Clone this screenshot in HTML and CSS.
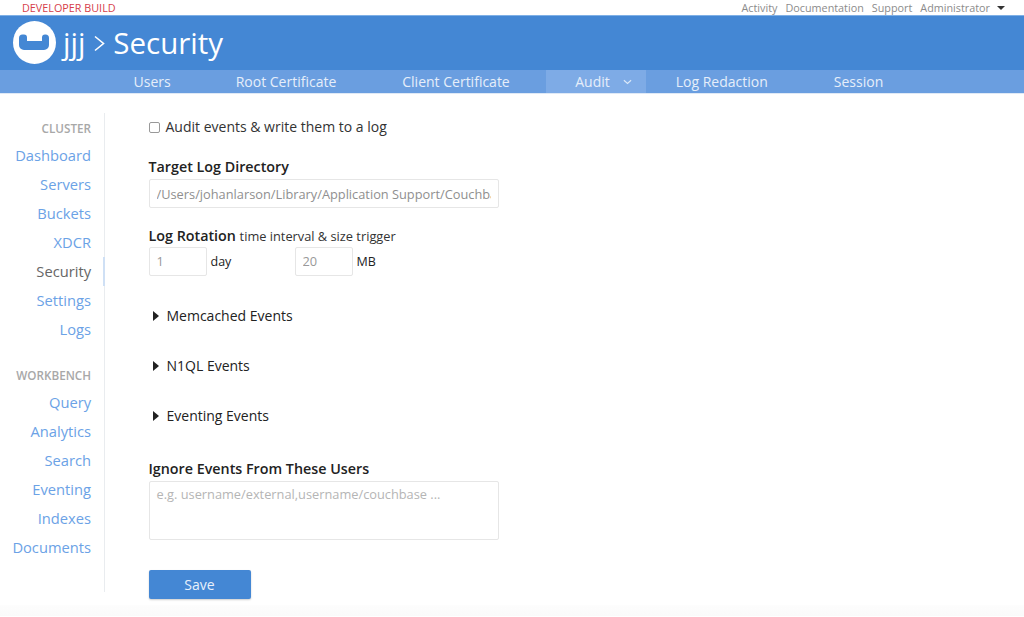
FILE: index.html
```html
<!DOCTYPE html>
<html lang="en">
<head>
<meta charset="utf-8">
<title>jjj > Security</title>
<link rel="stylesheet" href="styles.css">
</head>
<body>
<div class="topbar">
  <span class="dev">DEVELOPER BUILD</span>
  <nav class="toplinks">
    <a>Activity</a><a>Documentation</a><a>Support</a><a>Administrator<i class="caret"></i></a>
  </nav>
</div>
<header class="header">
  <svg class="logo" viewBox="0 0 43 43" width="43" height="43">
    <circle cx="21.500" cy="21.500" r="21.500" fill="#fff"/>
    <path d="M6 17a3.500 3.500 0 0 1 3.500-3.500H11a3 3 0 0 1 3 3V20h15v-3.500a3 3 0 0 1 3-3h.5a3.500 3.500 0 0 1 3.500 3.500v7a5 5 0 0 1-5 5H11a5 5 0 0 1-5-5z" fill="#4487d4"/>
  </svg>
  <h1 class="title">jjj<svg class="chev" viewBox="0 0 11 17" width="11" height="17"><path d="M1 1.500 9.500 8.500 1 15.500" fill="none" stroke="#fff" stroke-width="1.600"/></svg>Security</h1>
</header>
<nav class="subnav">
  <a class="s-users">Users</a>
  <a class="s-root">Root Certificate</a>
  <a class="s-client">Client Certificate</a>
  <a class="s-audit active">Audit<svg viewBox="0 0 10 6" width="9" height="6"><path d="M1 1l4 3.500L9 1" fill="none" stroke="#dbe8f8" stroke-width="1.300"/></svg></a>
  <a class="s-log">Log Redaction</a>
  <a class="s-session">Session</a>
</nav>
<div class="main">
  <aside class="side">
    <div class="side-h">CLUSTER</div>
    <a>Dashboard</a><a>Servers</a><a>Buckets</a><a>XDCR</a>
    <a class="cur">Security</a><a>Settings</a><a>Logs</a>
    <div class="side-h second">WORKBENCH</div>
    <a>Query</a><a>Analytics</a><a>Search</a><a>Eventing</a><a>Indexes</a><a>Documents</a>
  </aside>
  <form class="content">
    <label class="check"><input type="checkbox"> Audit events &amp; write them to a log</label>
    <h4 class="lbl first">Target Log Directory</h4>
    <input class="path" type="text" value="/Users/johanlarson/Library/Application Support/Couchbase/var/lib/couchbase/logs">
    <h4 class="lbl rot">Log Rotation <small>time interval &amp; size trigger</small></h4>
    <div class="rotrow">
      <input class="num" type="text" value="1"><span class="unit u1">day</span>
      <input class="num" type="text" value="20"><span class="unit">MB</span>
    </div>
    <div class="disc d1"><i class="tri"></i>Memcached Events</div>
    <div class="disc"><i class="tri"></i>N1QL Events</div>
    <div class="disc"><i class="tri"></i>Eventing Events</div>
    <h4 class="lbl ign">Ignore Events From These Users</h4>
    <textarea class="ta" placeholder="e.g. username/external,username/couchbase ..."></textarea>
    <button class="save" type="button">Save</button>
  </form>
</div>
<div class="foot"></div>
</body>
</html>
```
FILE: styles.css
```css
*{box-sizing:border-box}
html,body{margin:0;height:617px;overflow:hidden;background:#fff}
body{font-family:"Open Sans",sans-serif;color:#333}
.topbar{height:15px;display:flex;justify-content:space-between;align-items:center;padding:0 19px 0 22px;background:#fff}
.dev{font-size:10.800px;color:#d6404a;line-height:15px}
.toplinks{display:flex;gap:8px;font-size:10.800px;color:#8b8b8b;line-height:15px}
.caret{display:inline-block;margin-left:7px;vertical-align:2px;border:4px solid transparent;border-top-color:#333;border-bottom:0}
.header{height:55px;background:#4487d4;display:flex;align-items:center;padding:0 0 1px 13px;border-top:1px solid #7fb0e6}
.logo{flex:none}
.title{margin:0 0 0 7px;font-weight:400;font-size:29.500px;color:#fff;line-height:40px;display:flex;align-items:center}
.chev{margin:2px 8px 0 9px}
.subnav{height:24px;background:#6a9ee0;display:flex;color:#e6eefa;font-size:14px;line-height:24px;border-bottom:1px solid #dfe9f6}
.subnav a{display:block}
.s-users{margin-left:133.500px}
.s-root{margin-left:65px}
.s-client{margin-left:66px}
.s-audit{margin-left:36.500px;width:100px;padding-left:29px;background:#7eabe6;display:flex!important;align-items:center}
.s-audit svg{margin-left:13px}
.s-log{margin-left:29.500px}
.s-session{margin-left:66px}
.main{display:flex;height:511px;padding-top:19px}
.side{width:105px;height:479px;border-right:1px solid #e9ecef;padding:0 13px 0 0;text-align:right;font-size:14.700px;line-height:29px;color:#6ba2e6;flex:none}
.side a{display:block;position:relative}
.side-h{font-size:11.700px;font-weight:600;color:#a8a8a8;line-height:17px;margin-bottom:4px;margin-top:7px}
.side-h.second{margin-top:23px;margin-bottom:4px}
.cur{color:#666}
.cur::after{content:"";position:absolute;right:-14px;top:0;height:29px;width:2px;background:#cfe0f5}
.content{padding:0 0 0 43.500px;width:394px;flex:none;display:flex;flex-direction:column;align-items:flex-start}
.check{font-size:14px;line-height:18px;display:flex;align-items:center;margin-top:5px;color:#333}
.check input{width:11px;height:11px;margin:0 6px 0 0;appearance:none;border:1px solid #999;border-radius:2px;background:#fff}
.lbl{margin:0;font-size:14.300px;font-weight:600;color:#222;line-height:20px}
.lbl small{font-size:12.800px;font-weight:400;color:#333}
.first{margin-top:20.500px}
.path{margin-top:2.500px;width:350px;height:29px;border:1px solid #e6e6e6;border-radius:2px;padding:0 7px;font:12.800px "Open Sans",sans-serif;color:#8f8f8f;background:#fff;outline:0}
.rot{margin-top:17.500px}
.rotrow{display:flex;align-items:center;margin-top:1px;font-size:12.500px;font-weight:500;color:#222}
.num{width:58px;height:29px;border:1px solid #e6e6e6;border-radius:2px;padding:0 7px;font:12.800px "Open Sans",sans-serif;color:#999;background:#fff;outline:0}
.unit{margin-left:4px}
.u1{width:84px}
.disc{font-size:14px;line-height:20px;margin-top:30.300px;display:flex;align-items:center;color:#222;font-weight:400;height:20px}
.d1{margin-top:30px}
.tri{width:0;height:0;border:5px solid transparent;border-left:6px solid #222;border-right:0;margin:0 8px 0 4px}
.ign{margin-top:32.500px}
.ta{margin-top:2.500px;width:350px;height:59px;border:1px solid #e6e6e6;border-radius:2px;padding:3px 7px;font:12.800px "Open Sans",sans-serif;resize:none;outline:0;display:block}
.ta::placeholder{color:#b5b5b5}
.save{margin-top:30px;width:102px;height:29px;border:0;border-radius:2px;background:#4487d4;color:#e8f0fb;font:14px "Open Sans",sans-serif;box-shadow:0 1px 2px rgba(0,0,0,.2)}
.foot{height:11px;background:linear-gradient(#fdfdfd,#fafafa)}
```
